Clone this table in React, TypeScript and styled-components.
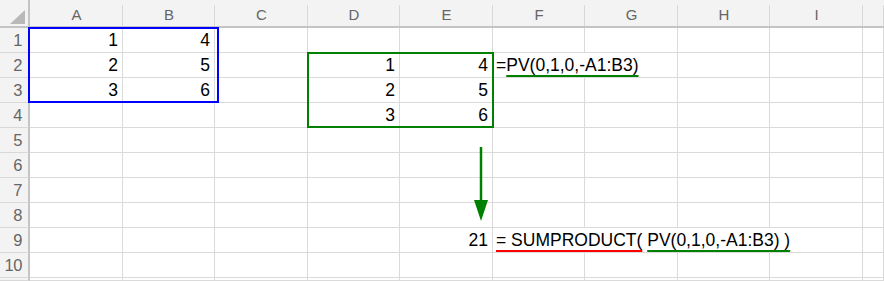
import React from 'react';
import styled, { createGlobalStyle } from 'styled-components';

const GlobalStyle = createGlobalStyle`
    html, body {
        margin: 0;
        padding: 0;
        background: #ffffff;
    }
    body {
        font-family: 'Liberation Sans', Arial, sans-serif;
    }
`;

type Tone = 'red' | 'green';

interface ICell {
    text?: string;
    align?: 'left' | 'right';
    span?: number;
    parts?: { text: string; tone?: Tone }[];
}

const COLUMNS = ['A', 'B', 'C', 'D', 'E', 'F', 'G', 'H', 'I'];
const ROW_COUNT = 11;

const TONES: Record<Tone, string> = {
    red: '#ff0000',
    green: '#008000',
};

// sheet contents, keyed by row number then column letter
const cells: Record<number, Record<string, ICell>> = {
    1: { A: { text: '1' }, B: { text: '4' } },
    2: {
        A: { text: '2' },
        B: { text: '5' },
        D: { text: '1' },
        E: { text: '4' },
        F: { align: 'left', span: 2, parts: [{ text: '=' }, { text: 'PV(0,1,0,-A1:B3)', tone: 'green' }] },
    },
    3: { A: { text: '3' }, B: { text: '6' }, D: { text: '2' }, E: { text: '5' } },
    4: { D: { text: '3' }, E: { text: '6' } },
    9: {
        E: { text: '21' },
        F: {
            align: 'left',
            span: 4,
            parts: [
                { text: '= SUMPRODUCT(', tone: 'red' },
                { text: ' ' },
                { text: 'PV(0,1,0,-A1:B3) )', tone: 'green' },
            ],
        },
    },
};

export default function App() {
    const body: React.ReactNode[] = [];

    // grid line 1 is the header row / header column, so sheet row r sits on grid row r + 1
    for (let row = 1; row <= ROW_COUNT; row++) {
        const gr = row + 1;
        body.push(
            <RowHead key={`h${row}`} style={{ gridRow: gr }}>
                {row <= 10 ? row : ''}
            </RowHead>,
        );
        const rowCells = cells[row] || {};
        let skip = 0;
        COLUMNS.forEach((col, ci) => {
            if (skip > 0) {
                skip--;
                return;
            }
            const cell = rowCells[col];
            const span = cell?.span || 1;
            skip = span - 1;
            body.push(
                <Cell key={`${col}${row}`} row={gr} col={ci + 2} span={span} align={cell?.align || 'right'}>
                    {cell?.parts
                        ? cell.parts.map((p, i) =>
                              p.tone ? (
                                  <Marked key={i} tone={p.tone}>
                                      {p.text}
                                  </Marked>
                              ) : (
                                  <React.Fragment key={i}>{p.text}</React.Fragment>
                              ),
                          )
                        : cell?.text}
                </Cell>,
            );
        });
        body.push(<Cell key={`x${row}`} row={gr} col={COLUMNS.length + 2} />);
    }

    return (
        <>
            <GlobalStyle />
            <Sheet>
                <Corner>
                    <CornerMark />
                </Corner>
                {COLUMNS.map((c) => (
                    <ColHead key={c}>{c}</ColHead>
                ))}
                <ColHead />
                {body}

                <Range color="#0000ff" rows="2 / 5" cols="2 / 4" inset="-1px -4px 0 -2px" />
                <Range color={TONES.green} rows="3 / 6" cols="5 / 7" inset="-1px -1px 0 -1px" />
                <Arrow>
                    <svg width="16" height="74" viewBox="0 0 16 74">
                        <line x1="8" y1="0" x2="8" y2="56" stroke={TONES.green} strokeWidth="2.5" />
                        <polygon points="1,53 15,53 8,74" fill={TONES.green} />
                    </svg>
                </Arrow>
            </Sheet>
        </>
    );
}

const Sheet = styled.div`
    display: grid;
    grid-template-columns: 30px 93px 92px 93px 92px 93px 92px 93px 92px 93px 1fr;
    grid-template-rows: 28px repeat(10, 25px) 1fr;
    width: 884px;
    height: 281px;
    overflow: hidden;
    background: #ffffff;
`;

const Corner = styled.div`
    grid-row: 1;
    display: flex;
    justify-content: flex-end;
    align-items: flex-end;
    padding: 0 3px 2px 0;
    box-sizing: border-box;
    background: #f3f3f3;
    border-right: 2px solid #c4c4c4;
    border-bottom: 2px solid #c4c4c4;
`;

const CornerMark = styled.div`
    width: 15px;
    height: 14px;
    background: #b9b9b9;
    clip-path: polygon(100% 0, 100% 100%, 0 100%);
`;

const ColHead = styled.div`
    grid-row: 1;
    box-sizing: border-box;
    display: flex;
    align-items: center;
    justify-content: center;
    padding-top: 2px;
    background: linear-gradient(#d8d8d8, #d8d8d8) right bottom / 1px calc(100% - 5px) no-repeat, #f3f3f3;
    border-bottom: 2px solid #c4c4c4;
    color: #666666;
    font-size: 15px;
`;

const RowHead = styled.div`
    grid-column: 1;
    box-sizing: border-box;
    display: flex;
    align-items: center;
    justify-content: flex-end;
    padding: 1px 6px 0 0;
    background: #f3f3f3;
    border-right: 2px solid #c4c4c4;
    border-bottom: 1px solid #d8d8d8;
    color: #666666;
    font-size: 16.5px;
    letter-spacing: -0.4px;
`;

const Cell = styled.div<{ row: number; col: number; align?: 'left' | 'right'; span?: number }>`
    grid-row: ${(p) => p.row};
    grid-column: ${(p) => p.col} / span ${(p) => p.span || 1};
    box-sizing: border-box;
    border-right: 1px solid #dadada;
    border-bottom: 1px solid #dadada;
    padding: ${(p) => (p.align === 'left' ? '0 0 0 3px' : '0 4px 0 0')};
    text-align: ${(p) => p.align || 'right'};
    line-height: 25px;
    font-size: 17.5px;
    color: #000000;
    white-space: nowrap;
`;

const Marked = styled.span<{ tone: Tone }>`
    text-decoration: underline;
    text-decoration-color: ${(p) => TONES[p.tone]};
    text-decoration-thickness: 2px;
    text-underline-offset: 4px;
    text-decoration-skip-ink: none;
`;

const Range = styled.div<{ color: string; rows: string; cols: string; inset: string }>`
    grid-row: ${(p) => p.rows};
    grid-column: ${(p) => p.cols};
    margin: ${(p) => p.inset};
    border: 2px solid ${(p) => p.color};
    z-index: 2;
    pointer-events: none;
`;

const Arrow = styled.div`
    grid-row: 6 / 10;
    grid-column: 6;
    justify-self: end;
    align-self: start;
    margin: 19px 4px 0 0;
    z-index: 2;
    line-height: 0;
`;
